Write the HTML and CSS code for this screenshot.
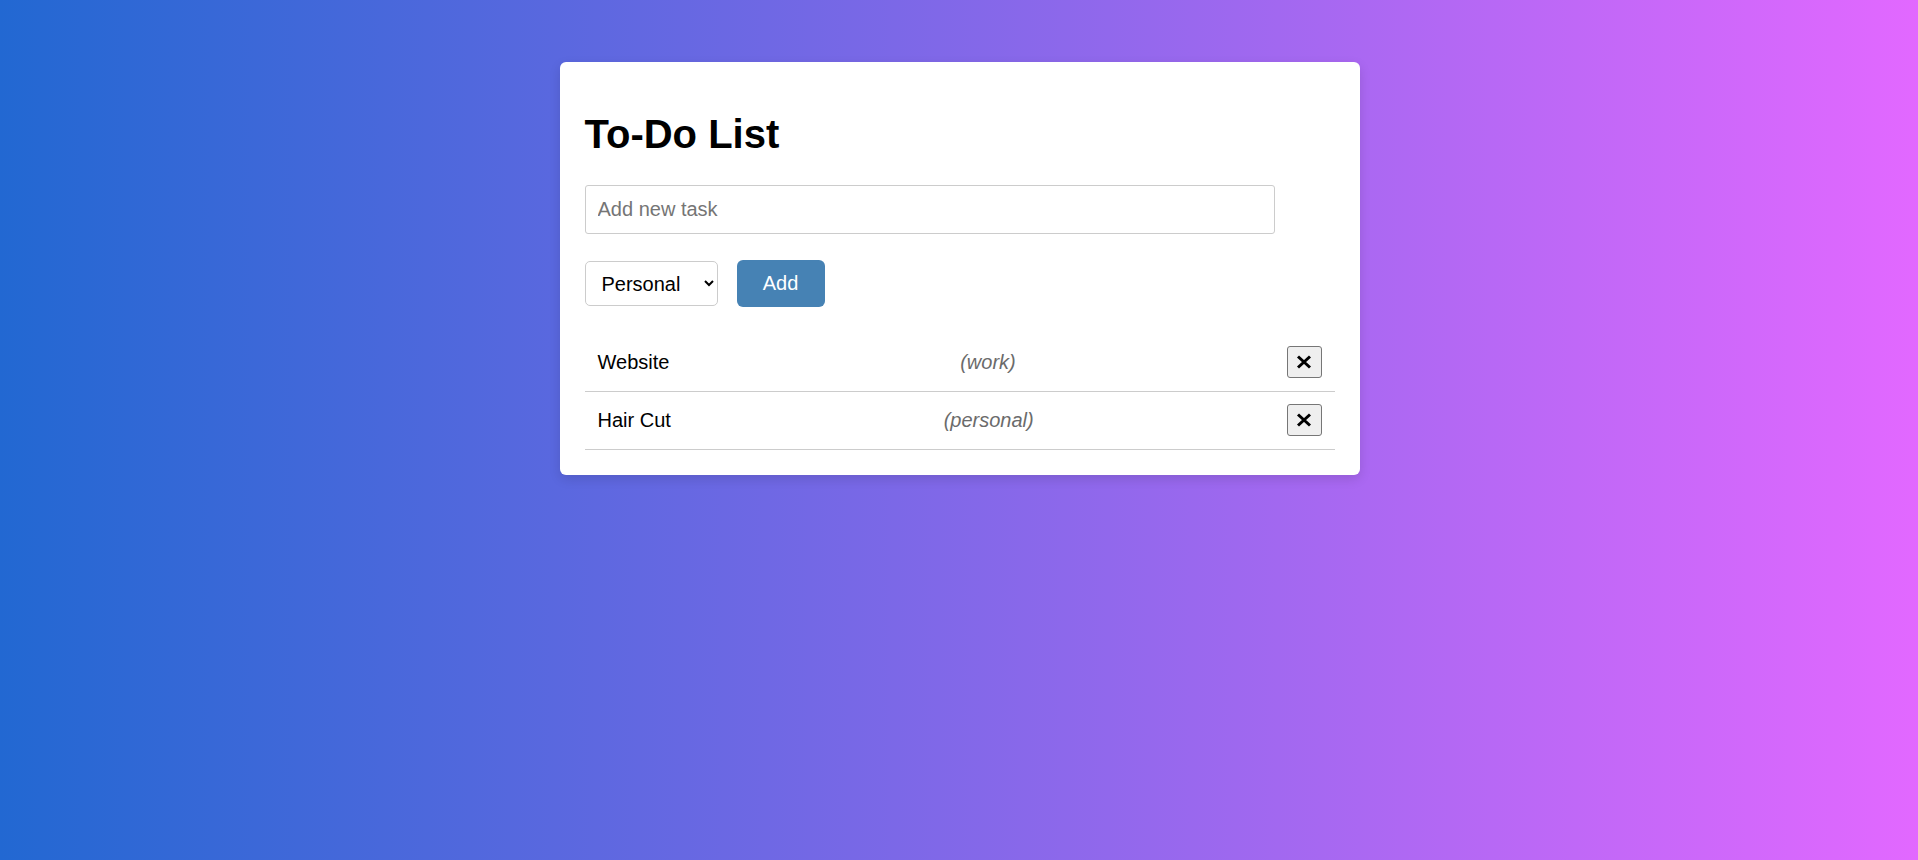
FILE: index.html
```html
<!DOCTYPE html>
<html lang="en">
<head>
<meta charset="utf-8">
<title>To-Do List</title>
<link rel="stylesheet" href="styles.css">
</head>
<body>
<main class="card">
  <h1 class="title">To-Do List</h1>
  <input class="task-input" type="text" placeholder="Add new task">
  <div class="controls">
    <select class="category-select">
      <option>Personal</option>
      <option>Work</option>
    </select>
    <button class="add-btn" type="button">Add</button>
  </div>
  <ul class="task-list">
    <li class="task">
      <span class="task-text">Website</span>
      <span class="task-cat">(work)</span>
      <button class="del-btn" type="button" aria-label="Delete"><svg width="16" height="14" viewBox="0 0 16 14"><path d="M2 1.5 L14 12.5 M14 1.5 L2 12.5" stroke="#000" stroke-width="3" fill="none"/></svg></button>
    </li>
    <li class="task">
      <span class="task-text">Hair Cut</span>
      <span class="task-cat">(personal)</span>
      <button class="del-btn" type="button" aria-label="Delete"><svg width="16" height="14" viewBox="0 0 16 14"><path d="M2 1.5 L14 12.5 M14 1.5 L2 12.5" stroke="#000" stroke-width="3" fill="none"/></svg></button>
    </li>
  </ul>
</main>
</body>
</html>
```

FILE: styles.css
```css
html, body {
  margin: 0;
  padding: 0;
}
body {
  min-height: 100vh;
  background: linear-gradient(to right, #2268d2, #e268ff);
  font-family: "Liberation Sans", Arial, sans-serif;
  font-size: 20px;
  color: #000;
  display: flex;
  justify-content: center;
  align-items: flex-start;
  padding-left: 1px;
  box-sizing: border-box;
}
.card {
  box-sizing: border-box;
  width: 800px;
  margin-top: 62px;
  background: #fff;
  border-radius: 6px;
  padding: 24px 25px 25px;
  box-shadow: 0 4px 12px rgba(0, 0, 0, 0.12);
}
.title {
  margin: 25px 0 28px;
  font-size: 40px;
  font-weight: bold;
  line-height: 46px;
}
.task-input {
  display: block;
  box-sizing: border-box;
  width: 690px;
  height: 49px;
  margin: 0;
  padding: 0 12px;
  border: 1px solid #ccc;
  border-radius: 3px;
  font-family: inherit;
  font-size: 20px;
  color: #000;
  background: #fff;
  outline: none;
}
.task-input::placeholder {
  color: #757575;
}
.controls {
  display: flex;
  align-items: center;
  gap: 19px;
  margin-top: 26px;
}
.category-select {
  box-sizing: border-box;
  width: 133px;
  height: 45px;
  padding: 0 8px 0 12px;
  border: 1px solid #ccc;
  border-radius: 5px;
  background: #fff;
  font-family: inherit;
  font-size: 20px;
  color: #000;
}
.add-btn {
  box-sizing: border-box;
  width: 88px;
  height: 47px;
  padding: 0;
  border: none;
  border-radius: 6px;
  background: #4682b4;
  color: #fff;
  font-family: inherit;
  font-size: 20px;
}
.task-list {
  list-style: none;
  margin: 27px 0 0;
  padding: 0;
}
.task {
  display: flex;
  align-items: center;
  justify-content: space-between;
  padding: 12px 13px 13px;
  border-bottom: 1px solid #ccc;
}
.task-text {
  font-size: 20px;
}
.task-cat {
  margin-left: 20px;
  font-style: italic;
  color: #6b6b6b;
  font-size: 20px;
}
.del-btn {
  box-sizing: border-box;
  width: 35px;
  height: 32px;
  padding: 0;
  display: flex;
  align-items: center;
  justify-content: center;
  background: #efefef;
  border: 1px solid #767676;
  border-radius: 3px;
}
.del-btn svg {
  display: block;
}
```
